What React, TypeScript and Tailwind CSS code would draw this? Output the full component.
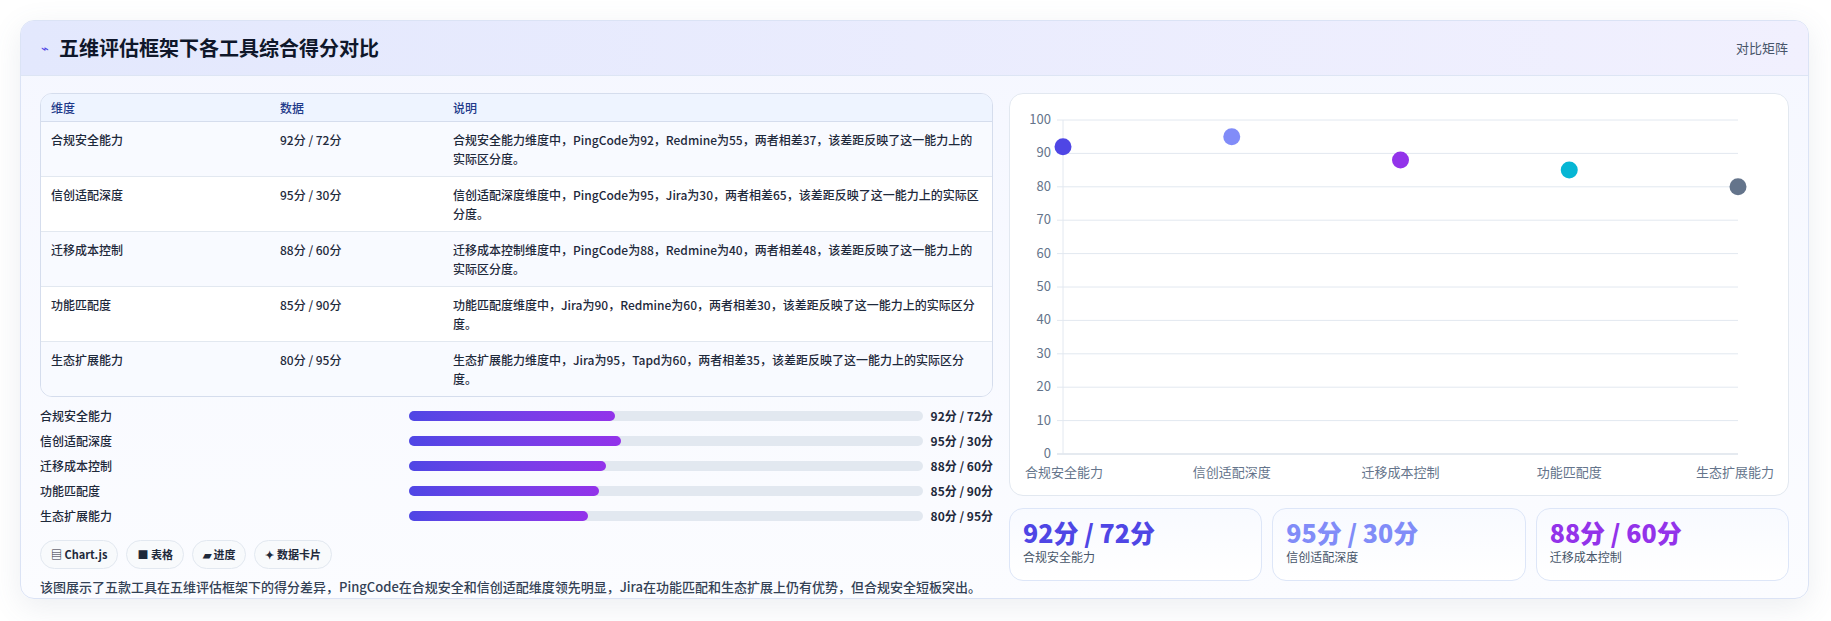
import React from "react";

const rows = [
  ["合规安全能力", "92分 / 72分", "合规安全能力维度中，PingCode为92，Redmine为55，两者相差37，该差距反映了这一能力上的实际区分度。", 92],
  ["信创适配深度", "95分 / 30分", "信创适配深度维度中，PingCode为95，Jira为30，两者相差65，该差距反映了这一能力上的实际区分度。", 95],
  ["迁移成本控制", "88分 / 60分", "迁移成本控制维度中，PingCode为88，Redmine为40，两者相差48，该差距反映了这一能力上的实际区分度。", 88],
  ["功能匹配度", "85分 / 90分", "功能匹配度维度中，Jira为90，Redmine为60，两者相差30，该差距反映了这一能力上的实际区分度。", 85],
  ["生态扩展能力", "80分 / 95分", "生态扩展能力维度中，Jira为95，Tapd为60，两者相差35，该差距反映了这一能力上的实际区分度。", 80],
] as const;

const colors = ["#4f46e5", "#818cf8", "#9333ea", "#06b6d4", "#64748b"];

function Chart() {
  const x0 = 53, x1 = 728, yTop = 26, yBot = 360;
  const xs = [0, 1, 2, 3, 4].map((i) => x0 + ((x1 - x0) * i) / 4);
  const yv = (v: number) => yBot - ((yBot - yTop) * v) / 100;
  return (
    <svg width="780" height="403" className="block">
      {[0, 10, 20, 30, 40, 50, 60, 70, 80, 90, 100].map((t) => (
        <g key={t}>
          <line x1={x0 - 6} x2={x1} y1={yv(t)} y2={yv(t)} stroke={t === 0 ? "#cbd5e1" : "#e2e8f0"} />
          <text x={x0 - 12} y={yv(t) + 4} textAnchor="end" fontSize="13" fill="#64748b">{t}</text>
        </g>
      ))}
      <line x1={x0} x2={x0} y1={yTop} y2={yBot} stroke="#e2e8f0" />
      {rows.map((r, i) => (
        <g key={i}>
          <text x={i === 0 ? xs[i] - 38 : i === 4 ? xs[i] - 42 : xs[i]} y={383} textAnchor={i === 0 || i === 4 ? "start" : "middle"} fontSize="13" fill="#64748b">{r[0]}</text>
          <circle cx={xs[i]} cy={yv(r[3])} r="8.5" fill={colors[i]} />
        </g>
      ))}
    </svg>
  );
}

export default function App() {
  return (
    <div className="w-[1831px] h-[621px] bg-white pt-[20px] pl-[20px]" style={{ fontFamily: '"Noto Sans CJK SC", "Noto Sans", sans-serif' }}>
      <div className="w-[1789px] h-[579px] rounded-[14px] border border-[#dbe3f5] bg-gradient-to-b from-[#f5f7ff] to-[#fbfcff] shadow-[0_8px_30px_rgba(100,116,139,0.12)] overflow-hidden">
        <div className="h-[55px] flex items-center justify-between px-[20px] bg-gradient-to-r from-[#e3e8fd] to-[#f1f0fe] border-b border-[#dde5f4]">
          <div className="flex items-center gap-[10px]">
            <span className="text-[#4f46e5] text-[13px]">⌁</span>
            <span className="text-[20px] font-bold text-[#0f172a]">五维评估框架下各工具综合得分对比</span>
          </div>
          <span className="text-[13px] text-[#475569]">对比矩阵</span>
        </div>
        <div className="flex gap-[16px] px-[19px] pt-[17px]">
          <div className="w-[955px] flex flex-col">
            <div className="rounded-[12px] border border-[#d5dded] bg-[#f8faff] overflow-hidden">
              <div className="flex h-[28px] items-center bg-[#eef4ff] border-b border-[#d5dded] text-[12px] text-[#1e3a8a] font-medium">
                <div className="w-[229px] pl-[10px]">维度</div>
                <div className="w-[173px] pl-[10px]">数据</div>
                <div className="flex-1 pl-[10px]">说明</div>
              </div>
              {rows.map((r, i) => (
                <div key={i} className={`flex text-[12px] text-[#1e293b] font-medium py-[8px] ${i < 4 ? "border-b border-[#e2e8f0]" : ""} ${i % 2 === 0 ? "bg-[#f8faff]" : "bg-white"}`}>
                  <div className="w-[229px] pl-[10px] leading-[19px]">{r[0]}</div>
                  <div className="w-[173px] pl-[10px] leading-[19px]">{r[1]}</div>
                  <div className="flex-1 pl-[10px] pr-[12px] leading-[19px]">{r[2]}</div>
                </div>
              ))}
            </div>
            <div className="flex flex-col gap-[5px] mt-[9px]">
              {rows.map((r, i) => (
                <div key={i} className="flex items-center h-[20px] text-[12px] font-medium text-[#1e293b]">
                  <div className="w-[369px]">{r[0]}</div>
                  <div className="w-[514px] h-[10px] rounded-full bg-[#e2e8f0]">
                    <div className="h-full rounded-full bg-gradient-to-r from-[#4f46e5] to-[#9333ea]" style={{ width: `${r[3] * 0.435}%` }} />
                  </div>
                  <div className="ml-auto font-bold">{r[1]}</div>
                </div>
              ))}
            </div>
            <div className="flex gap-[8px] mt-[14px]">
              {["▤ Chart.js", "■ 表格", "▰ 进度", "✦ 数据卡片"].map((b) => (
                <div key={b} className="h-[29px] px-[10px] flex items-center rounded-full border border-[#e2e8f0] bg-[#f8fafc] text-[11px] font-bold text-[#1e293b]">{b}</div>
              ))}
            </div>
            <div className="mt-[8px] text-[13px] text-[#334155] font-medium">该图展示了五款工具在五维评估框架下的得分差异，PingCode在合规安全和信创适配维度领先明显，Jira在功能匹配和生态扩展上仍有优势，但合规安全短板突出。</div>
          </div>
          <div className="w-[780px] flex flex-col gap-[12px]">
            <div className="h-[403px] rounded-[14px] border border-[#e2e8f0] bg-white overflow-hidden">
              <Chart />
            </div>
            <div className="flex gap-[10px]">
              {[0, 1, 2].map((i) => (
                <div key={i} className="w-[254px] h-[73px] rounded-[14px] border border-[#dde6f8] bg-gradient-to-b from-[#f8faff] to-white px-[13px] pt-[7px]">
                  <div className="text-[25px] font-black leading-[32px]" style={{ color: colors[i] }}>{rows[i][1]}</div>
                  <div className="text-[12px] text-[#475569]">{rows[i][0]}</div>
                </div>
              ))}
            </div>
          </div>
        </div>
      </div>
    </div>
  );
}
